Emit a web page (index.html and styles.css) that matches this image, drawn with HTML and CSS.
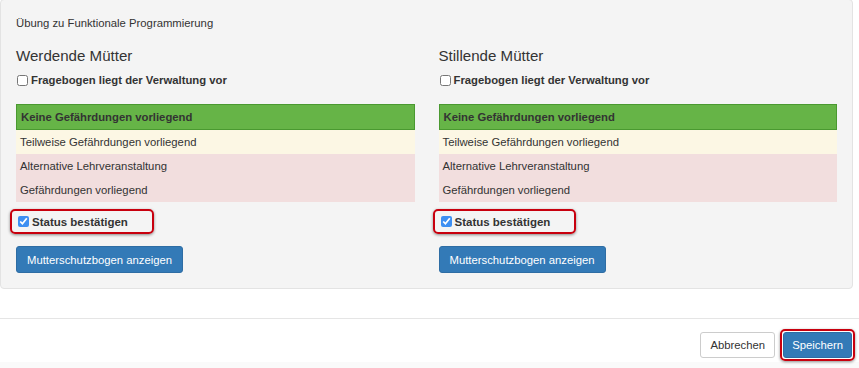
FILE: index.html
```html
<!DOCTYPE html>
<html lang="de">
<head>
  <meta charset="UTF-8" />
  <title>Mutterschutz</title>
  <link rel="stylesheet" href="styles.css">
</head>
<body>
  <div class="well">
    <div class="course">Übung zu Funktionale Programmierung</div>
    <div class="columns">
      <div class="col">
        <h3>Werdende Mütter</h3>
        <label class="check-row"><input type="checkbox"> Fragebogen liegt der Verwaltung vor</label>
        <ul class="status-list">
          <li class="st-green">Keine Gefährdungen vorliegend</li>
          <li class="st-yellow">Teilweise Gefährdungen vorliegend</li>
          <li class="st-red">Alternative Lehrveranstaltung</li>
          <li class="st-red">Gefährdungen vorliegend</li>
        </ul>
        <label class="confirm"><input type="checkbox" checked> Status bestätigen</label>
        <div><button class="btn btn-primary">Mutterschutzbogen anzeigen</button></div>
      </div>
      <div class="col">
        <h3>Stillende Mütter</h3>
        <label class="check-row"><input type="checkbox"> Fragebogen liegt der Verwaltung vor</label>
        <ul class="status-list">
          <li class="st-green">Keine Gefährdungen vorliegend</li>
          <li class="st-yellow">Teilweise Gefährdungen vorliegend</li>
          <li class="st-red">Alternative Lehrveranstaltung</li>
          <li class="st-red">Gefährdungen vorliegend</li>
        </ul>
        <label class="confirm"><input type="checkbox" checked> Status bestätigen</label>
        <div><button class="btn btn-primary">Mutterschutzbogen anzeigen</button></div>
      </div>
    </div>
  </div>

  <div class="footer">
    <button class="btn btn-default">Abbrechen</button>
    <span class="ring"><button class="btn btn-primary">Speichern</button></span>
  </div>
  <div class="bottom-strip"></div>
</body>
</html>
```

FILE: styles.css
```css
body {
  margin: 0;
  font-family: "Liberation Sans", Arial, sans-serif;
  font-size: 11.3px;
  color: #333;
  background: #fff;
  overflow: hidden;
}

.well {
  margin-top: -1px;
  width: 853px;
  box-sizing: border-box;
  background-color: #f4f4f4;
  border: 1px solid #e3e3e3;
  border-radius: 4px;
  padding: 15px 15px 15px 15px;
}

.course {
  line-height: 17px;
}

.columns {
  display: flex;
  gap: 24px;
}

.col {
  width: 399px;
}

.col h3 {
  font-size: 15.1px;
  font-weight: normal;
  line-height: 20px;
  margin: 14px 0 6px;
}

.check-row {
  display: flex;
  align-items: center;
  font-weight: bold;
  line-height: 16px;
}

.check-row input,
.confirm input {
  width: 11px;
  height: 11px;
  margin: 0 3px 0 1px;
  accent-color: #3d8ff2;
}

.status-list {
  list-style: none;
  margin: 16px 0 0;
  padding: 0;
}

.status-list li {
  height: 24px;
  line-height: 24px;
  padding-left: 4px;
}

.st-green {
  background-color: #66b447;
  border: 1px solid #4a9930;
  font-weight: bold;
  padding-left: 4px;
}

.st-yellow {
  background-color: #fcf7e4;
}

.st-red {
  background-color: #f2dede;
}

.confirm {
  display: inline-flex;
  align-items: center;
  height: 21px;
  margin: 7px 0 0 -6px;
  padding: 0 24px 0 5px;
  border: 2px solid #c8000e;
  border-radius: 5px;
  box-shadow: 0 1px 3px rgba(0, 0, 0, 0.45);
  font-weight: bold;
  font-size: 11.5px;
}

.btn {
  font-family: "Liberation Sans", Arial, sans-serif;
  font-size: 11.3px;
  height: 27px;
  padding: 0 10px;
  border-radius: 3px;
  cursor: pointer;
}

.btn-primary {
  background-color: #337ab7;
  border: 1px solid #2e6da4;
  color: #fff;
}

.col .btn-primary {
  margin-top: 12px;
}

.btn-default {
  background-color: #fff;
  border: 1px solid #ccc;
  color: #333;
  height: 26px;
  padding: 0 9px;
}

.footer {
  margin-top: 29px;
  border-top: 1px solid #e5e5e5;
  display: flex;
  justify-content: flex-end;
  align-items: center;
  gap: 5px;
  padding: 9px 4px 0 0;
  height: 34px;
}

.ring {
  display: inline-flex;
  padding: 1px;
  border: 2px solid #c8000e;
  border-radius: 5px;
  box-shadow: 0 1px 3px rgba(0, 0, 0, 0.45);
}

.ring .btn {
  height: 26px;
  padding: 0 8px;
}

.bottom-strip {
  height: 8px;
  background: #fafafa;
}
```
